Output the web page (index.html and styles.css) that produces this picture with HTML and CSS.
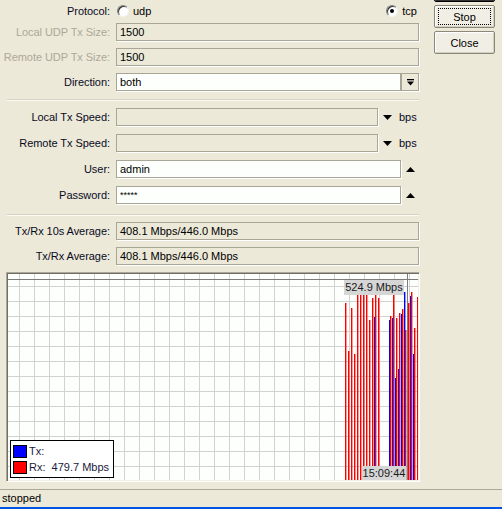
FILE: index.html
```html
<!DOCTYPE html>
<html>
<head>
<meta charset="utf-8">
<title>Bandwidth Test</title>
<link rel="stylesheet" href="styles.css">
</head>
<body>
<div class="window">
  <div class="main">
    <div class="form">
      <div class="row row-protocol">
        <div class="label">Protocol:</div>
        <div class="radios">
          <span class="radio-item"><span class="radio"></span>udp</span>
          <span class="radio-item"><span class="radio checked"></span>tcp</span>
        </div>
      </div>
      <div class="row mt1">
        <div class="label disabled">Local UDP Tx Size:</div>
        <div class="field ro grow">1500</div>
      </div>
      <div class="row mt7">
        <div class="label disabled">Remote UDP Tx Size:</div>
        <div class="field ro grow">1500</div>
      </div>
      <div class="row mt7">
        <div class="label">Direction:</div>
        <div class="field edit grow">both</div>
        <div class="ddbtn">
          <svg width="7" height="7" viewBox="0 0 7 7"><rect x="0" y="0" width="7" height="1.3" fill="#000"/><polygon points="0,2.5 7,2.5 3.5,6.5" fill="#000"/></svg>
        </div>
      </div>
      <div class="sep mt8"></div>
      <div class="row mt7">
        <div class="label">Local Tx Speed:</div>
        <div class="field ro w-speed"></div>
        <svg class="tri" width="9" height="5" viewBox="0 0 9 5"><polygon points="0,0 9,0 4.5,5" fill="#000"/></svg>
        <span class="unit">bps</span>
      </div>
      <div class="row mt8">
        <div class="label">Remote Tx Speed:</div>
        <div class="field ro w-speed"></div>
        <svg class="tri" width="9" height="5" viewBox="0 0 9 5"><polygon points="0,0 9,0 4.5,5" fill="#000"/></svg>
        <span class="unit">bps</span>
      </div>
      <div class="row mt8">
        <div class="label">User:</div>
        <div class="field edit w-user">admin</div>
        <svg class="tri" width="9" height="5" viewBox="0 0 9 5"><polygon points="0,5 9,5 4.5,0" fill="#000"/></svg>
      </div>
      <div class="row mt8">
        <div class="label">Password:</div>
        <div class="field edit w-user pw">*****</div>
        <svg class="tri" width="9" height="5" viewBox="0 0 9 5"><polygon points="0,5 9,5 4.5,0" fill="#000"/></svg>
      </div>
      <div class="sep mt10"></div>
      <div class="row mt6">
        <div class="label">Tx/Rx 10s Average:</div>
        <div class="field ro grow">408.1 Mbps/446.0 Mbps</div>
      </div>
      <div class="row mt7">
        <div class="label">Tx/Rx Average:</div>
        <div class="field ro grow">408.1 Mbps/446.0 Mbps</div>
      </div>
      <div class="chart mt7">
        <div class="plot">
          <svg class="plot-svg" width="410" height="206" viewBox="0 0 410 206">
            <defs>
              <pattern id="grid" x="11" y="12" width="15" height="15" patternUnits="userSpaceOnUse">
                <path d="M0.5 0V15M0 0.5H15" stroke="#d2d2d2" stroke-width="1" fill="none"/>
              </pattern>
            </defs>
            <rect width="410" height="206" fill="#fdfffd"/>
            <rect width="410" height="206" fill="url(#grid)"/>
            <line x1="0" y1="5.5" x2="410" y2="5.5" stroke="#7c7c7c"/>
            <g fill="#0000ff">
              <rect x="366" y="43" width="1.4" height="163"/>
              <rect x="381" y="46" width="1.4" height="160"/>
              <rect x="384" y="44" width="1.4" height="162"/>
              <rect x="387" y="104" width="1.4" height="102"/>
              <rect x="390" y="95" width="1.4" height="111"/>
              <rect x="393" y="40" width="1.4" height="166"/>
              <rect x="396" y="18" width="1.4" height="188"/>
              <rect x="402" y="22" width="1.4" height="184"/>
              <rect x="405" y="80" width="1.4" height="126"/>
            </g>
            <g fill="#ff0000">
              <rect x="337" y="29" width="1.4" height="177"/>
              <rect x="340" y="77" width="1.4" height="129"/>
              <rect x="343" y="34" width="1.4" height="172"/>
              <rect x="346" y="80" width="1.4" height="126"/>
              <rect x="349" y="21" width="1.4" height="185"/>
              <rect x="352" y="21" width="1.4" height="185"/>
              <rect x="355" y="21" width="1.4" height="185"/>
              <rect x="358" y="21" width="1.4" height="185"/>
              <rect x="361" y="46" width="1.4" height="160"/>
              <rect x="364" y="24" width="1.4" height="182"/>
              <rect x="367" y="21" width="1.4" height="185"/>
              <rect x="370" y="24" width="1.4" height="182"/>
              <rect x="382" y="42" width="1.4" height="164"/>
              <rect x="385" y="21" width="1.4" height="185"/>
              <rect x="388" y="44" width="1.4" height="162"/>
              <rect x="391" y="39" width="1.4" height="167"/>
              <rect x="394" y="35" width="1.4" height="171"/>
              <rect x="397" y="56" width="1.4" height="150"/>
              <rect x="400" y="29" width="1.4" height="177"/>
              <rect x="403" y="18" width="1.4" height="188"/>
              <rect x="406" y="54" width="1.4" height="152"/>
              <rect x="409" y="23" width="1.4" height="183"/>
            </g>
            <line x1="399.5" y1="0" x2="399.5" y2="206" stroke="#7c7c7c"/>
          </svg>
          <div class="tag tag-max">524.9 Mbps</div>
          <div class="tag tag-time">15:09:44</div>
          <div class="legend">
            <div class="leg-row"><span class="swatch tx"></span><span>Tx:</span></div>
            <div class="leg-row"><span class="swatch rx"></span><span class="pre">Rx:  479.7 Mbps</span></div>
          </div>
        </div>
      </div>
    </div>
    <div class="side">
      <div class="btn default"><span class="cap"></span></div>
      <div class="btn focus"><span class="cap">Stop</span></div>
      <div class="btn"><span class="cap">Close</span></div>
    </div>
  </div>
  <div class="status">stopped</div>
</div>
</body>
</html>
```

FILE: styles.css
```css
* { box-sizing: border-box; }
html, body { margin: 0; padding: 0; }
body {
  width: 502px;
  height: 509px;
  overflow: hidden;
  background: #ece9d8;
  font-family: "Liberation Sans", Arial, sans-serif;
  font-size: 11px;
  color: #000;
}
.window { display: flex; flex-direction: column; height: 509px; }
.main { display: flex; height: 489px; flex-shrink: 0; }
.form { width: 419px; display: flex; flex-direction: column; flex-shrink: 0; }

.row { display: flex; align-items: center; height: 18px; flex-shrink: 0; }
.row-protocol { height: 22px; }
.mt1 { margin-top: 1px; }
.mt6 { margin-top: 6px; }
.mt7 { margin-top: 7px; }
.mt8 { margin-top: 8px; }
.mt10 { margin-top: 10px; }

.label {
  width: 110px;
  margin-right: 6px;
  text-align: right;
  white-space: nowrap;
  letter-spacing: -0.05px;
  flex-shrink: 0;
  color: #0a0a1e;
}
.label.disabled { color: #aca899; }

.radios {
  flex: 1;
  display: flex;
  justify-content: space-between;
  align-items: center;
  padding-left: 1px;
  padding-right: 2px;
}
.radio-item { display: flex; align-items: center; }
.radio {
  width: 12px;
  height: 12px;
  border-radius: 50%;
  background: #fff;
  border: 1px solid;
  border-color: #808080 #f4f4f4 #f4f4f4 #808080;
  box-shadow: inset 1px 1px 0 #303030;
  margin-right: 4px;
  display: flex;
  align-items: center;
  justify-content: center;
}
.radio.checked::after {
  content: "";
  width: 4px;
  height: 4px;
  border-radius: 50%;
  background: #000;
}

.field {
  height: 18px;
  border: 1px solid #a8a696;
  box-shadow: 1px 1px 0 #fff;
  padding: 0 3px;
  line-height: 16px;
  white-space: nowrap;
  overflow: hidden;
  flex-shrink: 0;
}
.field.ro { background: transparent; }
.field.edit { background: #fcfffb; }
.field.pw { font-size: 9px; letter-spacing: 0; }
.grow { flex: 1; }
.w-speed { width: 262px; }
.w-user { width: 285px; }

.ddbtn {
  width: 18px;
  height: 18px;
  border: 1px solid #a8a696;
  box-shadow: 1px 1px 0 #fff;
  display: flex;
  align-items: center;
  justify-content: center;
  flex-shrink: 0;
}
.tri { margin-left: 5px; display: block; flex-shrink: 0; }
.unit { margin-left: 7px; color: #0a0a1e; }

.sep {
  margin-left: 7px;
  width: 412px;
  height: 2px;
  border-top: 1px solid #d6d2c2;
  border-bottom: 1px solid #fbfaf5;
  flex-shrink: 0;
}

.chart {
  margin-left: 6px;
  width: 414px;
  height: 210px;
  border: 1px solid;
  border-color: #aca899 #fff #fff #aca899;
  box-shadow: inset 1px 1px 0 #716f64, inset -1px -1px 0 #f1efe2;
  padding: 1px;
  flex-shrink: 0;
}
.plot { position: relative; width: 410px; height: 206px; }
.plot-svg { display: block; }

.tag {
  position: absolute;
  background: #d6d6d6;
  color: #1a1a1a;
  text-align: center;
  white-space: nowrap;
}
.tag-max { left: 336px; top: 6px; width: 60px; height: 15px; line-height: 15px; }
.tag-time { left: 354px; top: 192px; width: 44px; height: 14px; line-height: 14px; }

.legend {
  position: absolute;
  left: 2px;
  top: 166px;
  width: 104px;
  height: 38px;
  border: 1px solid #000;
  background: #fff;
  padding: 2px 2px;
  display: flex;
  flex-direction: column;
}
.leg-row { display: flex; align-items: center; height: 16px; color: #1a1a40; }
.swatch {
  width: 14px;
  height: 13px;
  border: 1px solid #000;
  margin-right: 2px;
  flex-shrink: 0;
}
.swatch.tx { background: #0000ff; }
.swatch.rx { background: #ff0000; }
.pre { white-space: pre; }

.side {
  display: flex;
  flex-direction: column;
  gap: 3px;
  margin-top: -21px;
  margin-left: 15px;
}
.btn {
  width: 61px;
  height: 23px;
  border: 1px solid #8a877a;
  border-radius: 2px;
  background: #f1efe5;
  box-shadow: inset 1px 1px 0 #fff, inset -1px -1px 0 #d4d0c0;
  padding: 2px 3px;
  display: flex;
  flex-shrink: 0;
}
.btn.default { border-color: #000; box-shadow: inset 0 -1px 0 #303030; }
.cap {
  flex: 1;
  display: flex;
  align-items: center;
  justify-content: center;
  border: 1px dotted transparent;
}
.btn.focus .cap { border-color: #000; }

.status {
  height: 20px;
  border-top: 1px solid #aca899;
  border-bottom: 2px solid #0054e3;
  padding-left: 2px;
  line-height: 17px;
  flex-shrink: 0;
}
```
